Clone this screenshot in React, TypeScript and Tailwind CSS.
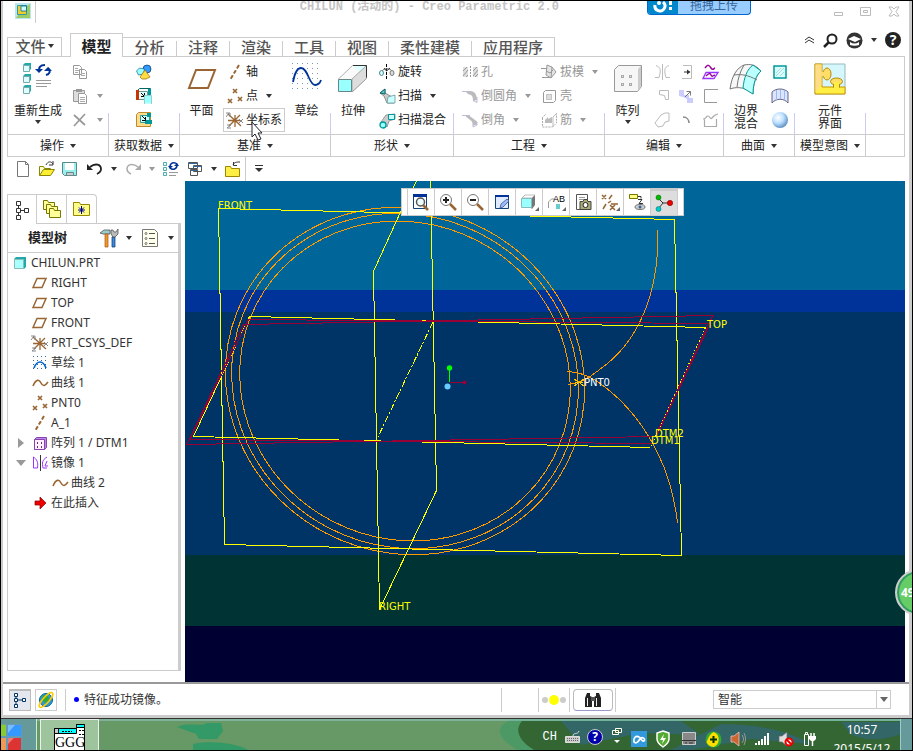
import { ReactNode } from "react";
import { clsx } from "clsx";

const ui = "font-['Noto_Sans','Noto_Sans_CJK_SC',sans-serif]";
const song = "font-['Liberation_Mono','Noto_Sans_CJK_SC',monospace]";

function Svg({ w, h, children, className }: { w: number; h: number; children: ReactNode; className?: string }) {
  return (
    <svg width={w} height={h} viewBox={`0 0 ${w} ${h}`} fill="none" className={clsx("shrink-0", className)} aria-hidden="true">
      {children}
    </svg>
  );
}

function Caret({ dim }: { dim?: boolean }) {
  return (
    <Svg w={6} h={4}>
      <path d="M0 0h6L3 4z" fill={dim ? "#999" : "#333"} />
    </Svg>
  );
}

/* ---------- ribbon icons ---------- */

const Cube = ({ x, y, s = 6 }: { x: number; y: number; s?: number }) => (
  <g>
    <path d={`M${x} ${y + 2}l2-2h${s}v${s}l-2 2z`} fill="#2aa" />
    <path d={`M${x + 0.5} ${y + 2.5}h${s}v${s}h-${s}z`} fill="#dff" stroke="#7aa" />
  </g>
);

const Regenerate = () => (
  <Svg w={30} h={32}>
    <Cube x={0} y={0} />
    <Cube x={0} y={11} />
    <Cube x={0} y={22} />
    <path d="M17 8c-2-3 0-6 5-6M25 5c3 3 2 6-2 7" stroke="#039" strokeWidth="2" />
    <path d="M12 6h8l-4 4zM21 8l4-4 4 4z" fill="#039" />
    <path d="M13 17.500h15M13 20.500h15M13 23.500h11" stroke="#999" />
  </Svg>
);

const Copy = () => (
  <Svg w={16} h={16}>
    <path d="M1.500 1.500h6l2 2v7h-8zM7.500 5.500h5l2 2v7h-7z" fill="#fff" stroke="#999" />
    <path d="M3 4.500h3M3 6.500h4M3 8.500h3M9 9.500h4M9 11.500h4" stroke="#aaa" />
  </Svg>
);

const Paste = () => (
  <Svg w={16} h={16}>
    <path d="M1.500 2.500h11v11h-11z" fill="#ddd" stroke="#999" />
    <path d="M4 1h6v3H4z" fill="#999" />
    <path d="M6.500 5.500h6l2 2v8h-8z" fill="#fff" stroke="#999" />
    <path d="M8 9.500h5M8 11.500h5M8 13.500h5" stroke="#aaa" />
  </Svg>
);

const Delete = () => (
  <Svg w={16} h={16}>
    <path d="M2 3l11 10M13 2L2 14" stroke="#999" strokeWidth="1.700" />
  </Svg>
);

const UserFeature = () => (
  <Svg w={18} h={16}>
    <circle cx="12" cy="5" r="4" fill="#39f" stroke="#036" strokeWidth=".7" />
    <path d="M1.500 7l3-3 5 1-1 5-5 1z" fill="#9ff" stroke="#069" strokeWidth=".7" />
    <path d="M5 13l5-7 5 7-4 2H7z" fill="#fd4" stroke="#960" strokeWidth=".7" />
  </Svg>
);

const CopyGeometry = () => (
  <Svg w={18} h={18}>
    <path d="M1.500 4.500l3-3h11v3" stroke="#066" fill="#fff" />
    <path d="M3.500 4.500h9v8h-9z" fill="#dff" stroke="#699" />
    <path d="M1 3h3v10H1z" fill="#c30" />
    <path d="M13 2h3v6h-3z" fill="#099" />
    <path d="M6 6l3 3M9.500 6v3.500H6" stroke="#000" />
    <path d="M9.500 8.500h7v8h-7z" fill="#9ff" />
    <path d="M9.500 17V8.500h7V17" stroke="#9cc" />
  </Svg>
);

const Shrinkwrap = () => (
  <Svg w={18} h={18}>
    <path d="M1.500 3.500l2-2h12v14h-14z" fill="#fd8" stroke="#b83" />
    <path d="M5.500 4.500h9v7h-9z" fill="#cff" stroke="#399" />
    <path d="M12 2h4v4h-4zM10 9h7v4h-7z" fill="#099" />
    <path d="M7 5l4 4M10.500 6v3.500H7" stroke="#000" />
  </Svg>
);

const PlaneBig = () => (
  <Svg w={30} h={32}>
    <path d="M9 7h19l-7 18H2z" fill="#fff" stroke="#963" strokeWidth="2" />
  </Svg>
);

const Plane = () => (
  <Svg w={16} h={14}>
    <path d="M5 2.500h9l-4 9H1z" stroke="#963" strokeWidth="1.500" />
  </Svg>
);

const Axis = () => (
  <Svg w={16} h={17}>
    <path d="M12 1L3 16" stroke="#963" strokeWidth="2" strokeDasharray="4 2" />
  </Svg>
);

const Points = () => (
  <Svg w={17} h={17}>
    <path d="M6 1l4 4M10 1L6 5M1 11l4 4M5 11l-4 4M11 9l4 4M15 9l-4 4" stroke="#963" strokeWidth="1.600" />
  </Svg>
);

const Csys = () => (
  <Svg w={18} h={17}>
    <path d="M2 2l13 12M14 3L3 14M2 8.500h12M9 3v12" stroke="#963" strokeWidth="1.300" />
    <path d="M0 1l4 0M4 1v4M0 5l3-4M13 7l4 4M17 7l-4 4M1 13h4l-4 3h4" stroke="#888" />
  </Svg>
);

const dots = (w: number, h: number, step: number, fill: string) => {
  const out: ReactNode[] = [];
  for (let y = 0; y < h; y += step)
    for (let x = 0; x < w; x += step) out.push(<rect key={`${x}-${y}`} x={x} y={y} width="1" height="1" fill={fill} />);
  return out;
};

const SketchBig = () => (
  <Svg w={30} h={32}>
    {dots(30, 30, 5, "#79b")}
    <path d="M1 19C3 8 6 5 9 5c7 0 8 17 14 17 3 0 5-2 6-5" stroke="#039" strokeWidth="1.800" />
  </Svg>
);

const ExtrudeBig = () => (
  <Svg w={30} h={32}>
    <path d="M.5 16L14.500 2.500h14v13L14 29z" fill="#fafafa" stroke="#999" strokeWidth=".8" />
    <path d="M14.500 2.500h14v13z" fill="#dff" />
    <path d="M14 16L28.500 2.500v13L14 29z" fill="#ddd" stroke="#999" strokeWidth=".8" />
    <path d="M15 2.500h13.500v12" stroke="#333" />
    <path d="M.5 16.500h13v12H.5z" fill="#9ff" stroke="#688" />
  </Svg>
);

const Revolve = () => (
  <Svg w={16} h={16}>
    <path d="M7.500 0v16" stroke="#000" strokeDasharray="3 1" />
    <path d="M3 7c2-3 8-3 10 0" stroke="#777" />
    <ellipse cx="2.500" cy="9" rx="2" ry="2.500" fill="#cff" stroke="#588" />
    <ellipse cx="13" cy="9" rx="2" ry="2.500" fill="#ddd" stroke="#777" />
    <path d="M5 4l2.500 3L11 4" stroke="#333" />
  </Svg>
);

const Sweep = () => (
  <Svg w={17} h={16}>
    <path d="M1 5l5-4v4l9 5v5H8L5 8z" fill="#ccc" stroke="#777" strokeWidth=".8" />
    <path d="M8 15l1-6 7-2v8z" fill="#cff" stroke="#699" strokeWidth=".8" />
    <path d="M1 5l5-4v5z" fill="#6cc" stroke="#066" />
  </Svg>
);

const SweptBlend = () => (
  <Svg w={17} h={17}>
    <path d="M2 10L7 3l9-1v5l-6 2-2 6z" fill="#ccc" stroke="#888" strokeWidth=".8" />
    <path d="M9.500 2.500h6v5h-6z" fill="#cff" stroke="#099" />
    <circle cx="4" cy="13" r="3" fill="#9ff" stroke="#099" strokeWidth="1.300" />
  </Svg>
);

const Hole = () => (
  <Svg w={17} h={14}>
    <path d="M1 2h5v10H1zM11 2h5v10h-5z" fill="#ddd" />
    <path d="M1 6l4-4M1 11l5-6M4 12l2-2M11 6l4-4M11 11l5-6M13 12l3-3" stroke="#999" />
    <path d="M8.500 1v12" stroke="#999" strokeDasharray="2 1" />
  </Svg>
);

const Round = () => (
  <Svg w={17} h={16}>
    <path d="M3 3h5c5 0 7 4 7 9l-4 1c0-5-1-6-5-7z" fill="#bbb" />
    <path d="M0 3.500h8M11 12.500l4 2V9" stroke="#bbd" />
  </Svg>
);

const Chamfer = () => (
  <Svg w={17} h={16}>
    <path d="M3 3.500h4l8 6v3l-4 1-1-4-5-4z" fill="#bbb" />
    <path d="M0 3.500h8M11 12v3l4-2v-3" stroke="#bbd" />
  </Svg>
);

const Draft = () => (
  <Svg w={16} h={16}>
    <path d="M6 1l5 2 4 5-5 6-5-3z" fill="#e4e4e4" stroke="#999" />
    <path d="M11 3l-1 11M5 7l4 2 3-3M0 4.500h6M1 13.500h8" stroke="#999" />
  </Svg>
);

const Shell = () => (
  <Svg w={15} h={15}>
    <path d="M1.500 3.500l2-2h10v10l-2 2h-10z" fill="#fff" stroke="#999" />
    <path d="M4.500 5.500h5v5h-5z" fill="#ddd" stroke="#999" strokeDasharray="1 1" />
  </Svg>
);

const Rib = () => (
  <Svg w={17} h={16}>
    <path d="M1.500 6v9h10l4-4V2M1 6l4-4" stroke="#aaa" strokeDasharray="2 1" />
    <path d="M4 8l3-3v2l4-2v6H4z" fill="#bbb" />
    <path d="M16 1l-4 4v10" stroke="#bbb" />
  </Svg>
);

const PatternBig = () => (
  <Svg w={30} h={32}>
    <path d="M1.500 6.500l4-4h23v21l-4 5h-23z" fill="#f6f6f6" stroke="#999" />
    <path d="M25 6l3-3v20l-3 5z" fill="#ccc" />
    {[[8, 12], [16, 12], [8, 20], [16, 20]].map(([x, y]) => (
      <rect key={`${x}-${y}`} x={x + 0.5} y={y + 0.5} width="2" height="2" fill="#ddd" stroke="#aaa" />
    ))}
  </Svg>
);

const gray = "#bbb";
const editIcons: ReactNode[][] = [
  [
    <path d="M8.500 0v16M2 1.500c5 2 5 5 3 12H1M15 1.500c-5 2-5 5-3 12h4" stroke={gray} />,
    <path d="M5.500 2.500h9v9h-3l-1-4-5-1z" stroke={gray} />,
    <path d="M7 3l4-2h4v8l-4 1-2 4-5 1-3-4 3-4z" stroke={gray} />,
  ],
  [
    <>
      <path d="M5 1.500h8.500v13H4" stroke={gray} />
      <path d="M6 8h5" stroke="#333" />
      <path d="M9 5.500L12.500 8 9 10.500z" fill="#333" />
    </>,
    <>
      <path d="M1 2h5v5h5v3h4v5H9v-4L5 9 1 8z" fill="#ccf" />
      <path d="M8.500 3.500h4v4M7 9l5-5" stroke="#777" />
    </>,
    <path d="M5 5c4 0 6 3 6 6" stroke="#888" strokeWidth="1.500" />,
  ],
  [
    <>
      <path d="M3 4c3-4 4-3 6 0s3 0 4 0" stroke="#909" strokeWidth="1.500" />
      <path d="M4 8.500h12l-4 6H1z" stroke="#93f" strokeWidth="1.300" />
      <path d="M4 12c3-3 4-3 5-1s2 1 4 0" stroke="#909" strokeWidth="1.500" />
    </>,
    <path d="M16 1.500H2.500v13H15" stroke="#999" />,
    <path d="M14.500 7v7.500h-12V7.500M1 7c3 0 3-3 5-3s2 4 4 2 3-4 6-4" stroke="#aaa" strokeWidth="1.200" />,
  ],
];

const BoundaryBlend = () => (
  <Svg w={34} h={32}>
    <path d="M1 26C3 12 8 5 15 2c6-1 11-1 17 6-5 4-8 13-8 23-6-6-15-8-23-5z" fill="#f7f7f7" stroke="#777" />
    <path d="M24 2l8 6c-5 4-8 13-8 23l-10-6c1-10 4-19 10-23z" fill="#bff" stroke="#099" />
    <path d="M5 12c8-1 14 0 23 5M15 2C11 9 9 15 8 24" stroke="#777" />
  </Svg>
);

const Fill = () => (
  <Svg w={16} h={16}>
    <path d="M2 2h12v12H2z" fill="#dff" stroke="#099" strokeWidth="1.500" />
    <path d="M4 9l5-5M4 12l8-8M8 12l4-4" stroke="#9dd" />
  </Svg>
);

const Style = () => (
  <Svg w={18} h={18}>
    <path d="M1 5c4-4 12-4 16 0v11c-4-5-12-5-16 0z" fill="#dde4ff" stroke="#557" strokeWidth=".9" />
    <path d="M5.500 3v10M9.500 3v9M13.500 3v10" stroke="#9be" />
  </Svg>
);

const Freestyle = () => (
  <Svg w={18} h={18}>
    <defs>
      <radialGradient id="ball" cx=".38" cy=".35" r=".7">
        <stop offset="0" stopColor="#fff" />
        <stop offset=".5" stopColor="#bce0ff" />
        <stop offset="1" stopColor="#58b" />
      </radialGradient>
    </defs>
    <circle cx="9" cy="9" r="8" fill="url(#ball)" />
  </Svg>
);

const ComponentInterface = () => (
  <Svg w={32} h={32}>
    <path d="M1 1h30v30H1z" fill="#d4f6fc" stroke="#9bb" />
    <path d="M1 1h7v23h23v7H1z" fill="#fe4" stroke="#c90" />
    <path d="M1.500 1.500h6v20l-6 8z" fill="#fd8" />
    <ellipse cx="13" cy="11" rx="4" ry="6" fill="#fd6" stroke="#b80" />
    <path d="M7 9h4v4H7z" fill="#fd6" />
    <ellipse cx="22.500" cy="18.500" rx="6" ry="3.500" fill="#fd6" stroke="#b80" />
    <path d="M20 19h5v6h-5z" fill="#fe4" />
    <path d="M19.500 21.500v3M25.500 21.500v3" stroke="#b80" />
  </Svg>
);

/* ---------- ribbon ---------- */

function Group({ label, width, children }: { label: string; width: string; children: ReactNode }) {
  return (
    <section className={clsx("flex shrink-0 flex-col", width)} aria-label={label}>
      <div className="flex flex-1">
        <div className="flex flex-1">{children}</div>
        <span className="h-[21px] w-px self-end bg-[#ccccee]" />
      </div>
      <button className="flex h-[22px] items-center justify-center gap-1.5 border-t border-r border-[#ccc]">
        {label}
        <Caret />
      </button>
    </section>
  );
}

function Big({ icon, lines, width, caret }: { icon: ReactNode; lines: string[]; width: string; caret?: boolean }) {
  return (
    <button className={clsx("flex shrink-0 flex-col items-center pt-1.5 leading-[13px]", width)}>
      {icon}
      <span className="mt-[9px] mb-[3px]">
        {lines.map((l) => (
          <span key={l} className="block">{l}</span>
        ))}
      </span>
      {caret && <Caret />}
    </button>
  );
}

function Row({ icon, label, dim, caret, boxed }: { icon: ReactNode; label?: string; dim?: boolean; caret?: boolean; boxed?: boolean }) {
  return (
    <button
      className={clsx(
        "flex h-6 items-center gap-0.5 border px-0.5 whitespace-nowrap",
        boxed ? "border-[#ccc]" : "border-transparent",
        dim && "text-[#999]"
      )}
    >
      <span className="flex w-[18px] justify-center">{icon}</span>
      {label}
      {caret && <span className="ml-1.5"><Caret dim={dim} /></span>}
    </button>
  );
}

function Ribbon() {
  return (
    <div className="mx-1 flex h-[101px] border border-[#ccc] text-xs text-[#222]">
      <Group label="操作" width="w-[101px]">
        <Big icon={<Regenerate />} lines={["重新生成"]} width="w-[60px]" caret />
        <div className="pt-[3px]">
          <Row icon={<Copy />} />
          <Row icon={<Paste />} caret dim />
          <Row icon={<Delete />} caret dim />
        </div>
      </Group>
      <Group label="获取数据" width="w-[71px]">
        <div className="mx-auto pt-[3px]">
          <Row icon={<UserFeature />} />
          <Row icon={<CopyGeometry />} />
          <Row icon={<Shrinkwrap />} />
        </div>
      </Group>
      <Group label="基准" width="w-[151px]">
        <Big icon={<PlaneBig />} lines={["平面"]} width="w-[43px]" />
        <div className="pt-[3px]">
          <Row icon={<Axis />} label="轴" />
          <Row icon={<Points />} label="点" caret />
          <Row icon={<Csys />} label="坐标系" boxed />
        </div>
        <Big icon={<SketchBig />} lines={["草绘"]} width="w-[43px]" />
      </Group>
      <Group label="形状" width="w-[123px]">
        <Big icon={<ExtrudeBig />} lines={["拉伸"]} width="w-[44px]" />
        <div className="pt-[3px]">
          <Row icon={<Revolve />} label="旋转" />
          <Row icon={<Sweep />} label="扫描" caret />
          <Row icon={<SweptBlend />} label="扫描混合" />
        </div>
      </Group>
      <Group label="工程" width="w-[151px]">
        <div className="w-[79px] pt-[3px] pl-1">
          <Row icon={<Hole />} label="孔" dim />
          <Row icon={<Round />} label="倒圆角" dim caret />
          <Row icon={<Chamfer />} label="倒角" dim caret />
        </div>
        <div className="pt-[3px] pl-1">
          <Row icon={<Draft />} label="拔模" dim caret />
          <Row icon={<Shell />} label="壳" dim />
          <Row icon={<Rib />} label="筋" dim caret />
        </div>
      </Group>
      <Group label="编辑" width="w-[119px]">
        <Big icon={<PatternBig />} lines={["阵列"]} width="w-[45px]" caret />
        {editIcons.map((col, i) => (
          <div key={i} className="pt-[3px]">
            {col.map((icon, j) => (
              <Row key={j} icon={<Svg w={17} h={16}>{icon}</Svg>} />
            ))}
          </div>
        ))}
      </Group>
      <Group label="曲面" width="w-[71px]">
        <Big icon={<BoundaryBlend />} lines={["边界", "混合"]} width="w-[44px]" />
        <div className="pt-[3px]">
          <Row icon={<Fill />} />
          <Row icon={<Style />} />
          <Row icon={<Freestyle />} />
        </div>
      </Group>
      <Group label="模型意图" width="w-[71px]">
        <Big icon={<ComponentInterface />} lines={["元件", "界面"]} width="w-full" />
      </Group>
      <div className="flex flex-1 items-end">
        <div className="h-[22px] w-full border-t border-[#ccc]" />
      </div>
    </div>
  );
}

/* ---------- title and tabs ---------- */

function TitleBar() {
  return (
    <header className="flex h-[30px] items-start overflow-hidden">
      <div className="flex h-[22px] w-[33px] items-center border-r border-[#ccc] pb-0.5 pl-3">
        <Svg w={16} h={16}>
          <path d="M0 0h16v16H0z" fill="#bde6f0" />
          <path d="M15 1v14l-14 0 2-3h9V3z" fill="#9c6" />
          <path d="M2.500 2.500h9v9h-9z" fill="#ec3" stroke="#399" />
          <path d="M6 3h5.500v5H6z" fill="#cff" stroke="#069" strokeWidth=".8" />
        </Svg>
      </div>
      <h1 className={clsx("-mt-0.5 ml-auto text-xs leading-4 font-bold whitespace-pre text-[#c4c4c4]", song)}>
        CHILUN (活动的) - Creo Parametric 2.0
      </h1>
      <button className="ml-[88px] flex h-[14px] w-[104px] overflow-hidden rounded-b border border-t-0 border-[#06c] bg-[#9cf] text-xs leading-[10px] text-[#369]">
        <span className="flex h-full w-[30px] items-start justify-center bg-[#08c]">
          <Svg w={22} h={12}>
            <path d="M3 4a5 5 0 1 0 8-3" stroke="#fff" strokeWidth="3" />
            <circle cx="7" cy="2" r="2" fill="#fff" />
            <path d="M17 0h3v4h-3zM17 6h3v3h-3z" fill="#fff" />
          </Svg>
        </span>
        <span className="flex-1">拖拽上传</span>
      </button>
      <div className="mt-1 ml-[83px] flex gap-4 pr-2 text-[#bbb]">
        <button aria-label="最小化"><Svg w={10} h={12}><path d="M.5 7.500h8v3h-8z" stroke="#bbb" /></Svg></button>
        <button aria-label="还原"><Svg w={12} h={12}><path d="M.5 2.500h10v8H.5zM3.500 5.500h4v2h-4z" stroke="#bbb" /></Svg></button>
        <button aria-label="关闭"><Svg w={13} h={12}><path d="M1 2h3l2 2 2-2h3L8 6.500l3 4.500H8L6 9l-2 2H1l3-4.500z" stroke="#bbb" /></Svg></button>
      </div>
    </header>
  );
}

const tabs = ["分析", "注释", "渲染", "工具", "视图", "柔性建模", "应用程序"];

function TabBar() {
  return (
    <div className="flex h-[25px] items-end px-1 text-[15px] leading-[18px] font-medium text-[#555]">
      <button className="flex h-[19px] w-[55px] items-center justify-center gap-0.5 border border-b-0 border-[#ccc] pb-0.5">
        文件
        <Caret />
      </button>
      <button className="relative -mb-px ml-2 h-6 w-[53px] border border-b-0 border-[#ccc] bg-white font-bold text-[#222]">模型</button>
      <nav className="flex h-[19px] items-end border-t border-r border-[#ccc]">
        {tabs.map((t, i) => (
          <button key={t} className={clsx("flex h-[15px] items-center justify-center pb-1", t.length > 2 ? "w-[83px]" : "w-[53px]", i > 0 && "border-l border-[#ccc]")}>
            {t}
          </button>
        ))}
      </nav>
      <div className="ml-auto flex h-[18px] items-center gap-2 self-start pr-1">
        <button aria-label="折叠"><Svg w={11} h={8}><path d="M1 4l4-3 5 3M1 7l4-3 5 3" stroke="#333" /></Svg></button>
        <button aria-label="搜索">
          <Svg w={15} h={15}><circle cx="9" cy="6" r="4.500" stroke="#222" strokeWidth="2" /><path d="M6 9l-5 5" stroke="#222" strokeWidth="2.500" /></Svg>
        </button>
        <button aria-label="学习" className="flex items-center gap-2">
          <Svg w={17} h={17}>
            <circle cx="8.500" cy="8.500" r="8" fill="#333" />
            <path d="M2 7l6-3 7 3-6 3z" fill="#fff" />
            <path d="M4 10c3 2 6 2 9 0v3c-3 1-6 1-9 0z" fill="#fff" />
          </Svg>
          <Caret />
        </button>
        <button aria-label="帮助" className="flex size-4 items-center justify-center rounded-full bg-[#222] text-sm leading-4 font-bold text-white">?</button>
      </div>
    </div>
  );
}

/* ---------- quick access ---------- */

function QuickBar() {
  return (
    <div className="flex h-6 items-center pl-[13px]">
      <button aria-label="新建"><Svg w={16} h={18}><path d="M1.500 1.500h8l3 3v12h-11zM9.500 1.500v3h3" fill="#fff" stroke="#777" /></Svg></button>
      <button aria-label="打开" className="ml-1.5">
        <Svg w={18} h={18}><path d="M1.500 15.500v-9h4l1 2h6v2" fill="#ffc" stroke="#880" /><path d="M1.500 15.500l4-6h11l-4 6z" fill="#fe3" stroke="#880" /><path d="M8 5c2-4 5-4 7-1M15 1v4h-4" stroke="#333" /></Svg>
      </button>
      <button aria-label="保存" className="ml-1.5">
        <Svg w={16} h={16}><path d="M.5 1.500h14v13h-12l-2-2z" fill="#9ee" stroke="#588" /><path d="M3 2h9v7H3z" fill="#fff" /><path d="M4.500 11.500h7v3h-7z" fill="#ccc" stroke="#688" /></Svg>
      </button>
      <button aria-label="撤消" className="ml-[9px] flex items-center gap-2">
        <Svg w={16} h={14}><path d="M3 5c5-4 11-3 11 2 0 3-2 4-4 5" stroke="#222" strokeWidth="1.800" /><path d="M0 2v6h6z" fill="#222" /></Svg>
        <Caret />
      </button>
      <button aria-label="重做" className="ml-2 flex items-center gap-2">
        <Svg w={16} h={14}><path d="M13 5C8 1 2 2 2 7c0 3 2 4 4 5" stroke="#aaa" strokeWidth="1.500" /><path d="M16 2v6h-6z" fill="#aaa" /></Svg>
        <Caret dim />
      </button>
      <button aria-label="重新生成" className="ml-2">
        <Svg w={16} h={16}><path d="M.5 1.500h3v3h-3zM.5 6.500h3v3h-3zM.5 11.500h3v3h-3z" fill="#dff" stroke="#5aa" /><path d="M6 11.500h9M6 14.500h7" stroke="#999" /><path d="M7 5c1-4 5-4 7-2M14 5c-1 4-5 4-7 2" stroke="#039" strokeWidth="1.500" /><path d="M5 5h5L7 8zM11 5h5l-2-3z" fill="#039" /></Svg>
      </button>
      <button aria-label="窗口" className="ml-2 flex items-center gap-2">
        <Svg w={16} h={16}><path d="M1.500 1.500h9v6h-9zM6.500 4.500h8v6h-8zM3.500 8.500h7v6h-7z" fill="#fff" stroke="#555" /><path d="M1 2.500h10M6 5.500h9M3 9.500h8" stroke="#369" /></Svg>
        <Caret />
      </button>
      <button aria-label="关闭" className="ml-2">
        <Svg w={16} h={17}><path d="M.5 5.500h5l1 2h8v8H.5z" fill="#fe4" stroke="#980" /><path d="M8 4c1-3 4-3 7-3M8.500 1v3.500H12" stroke="#333" /></Svg>
      </button>
      <span className="ml-1 h-6 w-px bg-[#ccc]" />
      <button aria-label="自定义" className="ml-2"><Svg w={10} h={8}><path d="M1 .5h8" stroke="#333" /><path d="M1 3h8L5 7z" fill="#333" /></Svg></button>
    </div>
  );
}

/* ---------- model tree ---------- */

const TreeIcon = ({ boxes = "#333" }: { boxes?: string }) => (
  <Svg w={14} h={20}>
    <path d="M1.500 1.500h4v4h-4zM1.500 8.500h4v4h-4zM1.500 15.500h4v4h-4zM9.500 8.500h4v4h-4zM3.500 5.500v3M3.500 12.500v3M5.500 10.500h4" stroke={boxes} />
  </Svg>
);

const Curve = () => (
  <Svg w={17} h={12}><path d="M1 9c3-7 6-7 8-3s4 3 7-1" stroke="#963" strokeWidth="1.600" /></Svg>
);

const Sketch = () => (
  <Svg w={15} h={15}>
    {dots(14, 14, 4, "#369")}
    <path d="M1 12C4 4 10 4 13 12" stroke="#06c" strokeWidth="1.700" />
  </Svg>
);

type Node = { label: string; icon: ReactNode; depth: 0 | 1 | 2; open?: boolean };

const nodes: Node[] = [
  { label: "CHILUN.PRT", depth: 0, icon: <Svg w={14} h={14}><path d="M1 3l2-2h10v10l-2 2z" fill="#2aa" /><path d="M1.500 3.500h9v9h-9z" fill="#aff" stroke="#8bb" /></Svg> },
  { label: "RIGHT", depth: 1, icon: <Plane /> },
  { label: "TOP", depth: 1, icon: <Plane /> },
  { label: "FRONT", depth: 1, icon: <Plane /> },
  { label: "PRT_CSYS_DEF", depth: 1, icon: <Csys /> },
  { label: "草绘 1", depth: 1, icon: <Sketch /> },
  { label: "曲线 1", depth: 1, icon: <Curve /> },
  { label: "PNT0", depth: 1, icon: <Points /> },
  { label: "A_1", depth: 1, icon: <Axis /> },
  {
    label: "阵列 1 / DTM1", depth: 1, open: false,
    icon: <Svg w={15} h={15}><path d="M1.500 3.500l2-2h10v10l-2 2h-10z" fill="#b8e" stroke="#84a" /><path d="M1.500 3.500h10v10h-10z" fill="#fef" stroke="#84a" /><path d="M4 6h1v2H4zM8 6h1v2H8zM4 10h1v2H4zM8 10h1v2H8z" fill="#636" /></Svg>,
  },
  {
    label: "镜像 1", depth: 1, open: true,
    icon: <Svg w={17} h={16}><path d="M8.500 0v16" stroke="#333" /><path d="M1.500 2c3 2 5 5 4 11h-4zM15 2c-5 3-5 6-4 11h4M15 6l-2 5h3" stroke="#93f" /></Svg>,
  },
  { label: "曲线 2", depth: 2, icon: <Curve /> },
  { label: "在此插入", depth: 1, icon: <Svg w={13} h={14}><path d="M1 5h5V1l6 6-6 6V9H1z" fill="#e00" stroke="#800" strokeWidth=".7" /></Svg> },
];

const indent = ["pl-[2px]", "pl-[22px]", "pl-[42px]"];

function ModelTree() {
  return (
    <aside className="flex w-[182px] shrink-0 flex-col pt-[13px] pb-[11px] pl-1">
      <div className="flex h-[29px]">
        <button aria-label="模型树" className="relative -mb-px flex w-[30px] items-center justify-center border border-b-0 border-[#ccc] bg-white"><TreeIcon /></button>
        <button aria-label="文件夹" className="flex w-[30px] items-center justify-center border-t border-r border-[#ccc]">
          <Svg w={20} h={20}>
            {[0, 4, 8].map((d) => (
              <path key={d} d={`M${1.5 + d * 0.75} ${1.5 + d}h4l1 2h6v7h-11z`} fill="#ff9" stroke="#770" />
            ))}
          </Svg>
        </button>
        <button aria-label="收藏夹" className="flex w-[30px] items-center justify-center rounded-tr-sm border-t border-r border-[#ccc]">
          <Svg w={18} h={16}><path d="M.5 1.500h6l1 2h9v11H.5z" fill="#ff8" stroke="#980" /><path d="M8.500 5v8M5 9h7M6 6.500l5 5M11 6.500l-5 5" stroke="#009" /></Svg>
        </button>
      </div>
      <div className="flex w-[174px] flex-1 flex-col border border-r-[3px] border-[#ccc]">
        <div className="flex h-[29px] items-center border-b border-[#ccc] pl-5">
          <h2 className="text-[13px] font-bold text-[#222]">模型树</h2>
          <button aria-label="设置" className="ml-8 flex items-center gap-[7px]">
            <Svg w={20} h={20}>
              <path d="M1 5l4-3 6 0v4H6l-2 0z" fill="#9cc" stroke="#555" strokeWidth=".8" />
              <path d="M6 6h3v13H6z" fill="#e92" stroke="#a52" strokeWidth=".7" />
              <path d="M13 9h3v10h-3z" fill="#48d" stroke="#036" strokeWidth=".7" />
              <path d="M12 2v4l2 3h2l3-3V1l-2 3h-2l-1-2z" fill="#bbb" stroke="#555" strokeWidth=".8" />
            </Svg>
            <Caret />
          </button>
          <button aria-label="显示" className="ml-2.5 flex items-center gap-[9px]">
            <Svg w={17} h={20}>
              <path d="M.5 1.500h12l3 3v14H.5z" fill="#ffe" stroke="#777" />
              <path d="M7 5.500h6M7 10.500h6M7 15.500h6" stroke="#555" />
              <circle cx="4" cy="5.500" r="1" stroke="#555" strokeWidth=".8" /><circle cx="4" cy="10.500" r="1" stroke="#555" strokeWidth=".8" /><circle cx="4" cy="15.500" r="1" stroke="#555" strokeWidth=".8" />
            </Svg>
            <Caret />
          </button>
        </div>
        <ul className="text-xs text-[#333]">
          {nodes.map((n) => (
            <li key={n.label} className="flex h-5 items-center">
              {n.open !== undefined && (
                <button aria-label="展开" className="-mr-[18px] flex w-[18px] justify-end">
                  <Svg w={10} h={10}><path d={n.open ? "M0 2h10L5 8z" : "M2 0l6 5-6 5z"} fill="#999" /></Svg>
                </button>
              )}
              <div className={clsx("flex items-center", indent[n.depth])}>
                <span className="flex w-5 justify-center">{n.icon}</span>
                <span className="ml-px">{n.label}</span>
              </div>
            </li>
          ))}
        </ul>
      </div>
    </aside>
  );
}

/* ---------- graphics area ---------- */

const viewTools: { label: string; icon: ReactNode }[] = [
  { label: "重新调整", icon: <><path d="M1.500 2.500v13h13v-13z" fill="#fff" stroke="#147" /><path d="M1 2.500h14" stroke="#039" strokeWidth="3" /><circle cx="8.500" cy="9" r="4" fill="#eff" stroke="#555" strokeWidth="1.500" /><path d="M11 12l5 5" stroke="#963" strokeWidth="2.500" /></> },
  { label: "放大", icon: <><circle cx="7" cy="7" r="5.500" fill="#fff" stroke="#777" /><path d="M4 7h6M7 4v6" stroke="#222" strokeWidth="2" /><path d="M11 11l6 6" stroke="#963" strokeWidth="2.500" /></> },
  { label: "缩小", icon: <><circle cx="7" cy="7" r="5.500" fill="#fff" stroke="#777" /><path d="M4 7h6" stroke="#222" strokeWidth="2" /><path d="M11 11l6 6" stroke="#963" strokeWidth="2.500" /></> },
  { label: "重画", icon: <><path d="M2.500 2.500h13v13h-13z" fill="#ddeaff" stroke="#147" /><path d="M2 3h14" stroke="#039" strokeWidth="2" /><path d="M14 6l-6 5-1 4 3-1 6-6z" fill="#9bf" stroke="#458" strokeWidth=".8" /></> },
  { label: "显示样式", icon: <><path d="M2 5l3-3h10v10l-3 4z" fill="#777" /><path d="M2 5l3-3h10l-3 3z" fill="#fff" stroke="#999" strokeWidth=".6" /><path d="M1.500 5.500h10v9h-10z" fill="#9ff" stroke="#8bb" /><path d="M19 14v4h-4z" fill="#666" /></> },
  { label: "已保存方向", icon: <><path d="M1.500 15V9l3-3H7" stroke="#999" /><path d="M9 11h4v5H9z" fill="#6cc" /><text x="6" y="9" fontSize="9" fill="#000" fontFamily="Liberation Sans">AB</text><path d="M19 14v4h-4z" fill="#666" /></> },
  { label: "视图管理器", icon: <><path d="M2.500 1.500h11v15h-11z" fill="#fff" stroke="#555" /><path d="M5 4.500h6M5 6.500h6" stroke="#999" /><path d="M6 8.500h3l1-2h3l1 2h3v8H6z" fill="#aa7" stroke="#444" /><circle cx="11.500" cy="12" r="2.500" fill="#fff" stroke="#222" /></> },
  { label: "基准显示", icon: <><path d="M1 2l4 4M5 2L1 6M9 12l5 5M14 12l-5 5M2 16l3-5M8 6l3-4M7 10l3-2M10 11h7" stroke="#963" strokeWidth="1.500" /><path d="M19 14v4h-4z" fill="#666" /></> },
  { label: "注释显示", icon: <><path d="M1.500 1.500h8v4h-8z" fill="#ff8" stroke="#770" /><path d="M10 3.500h3v2M10 6.500h4l-3 4h4" stroke="#333" /><ellipse cx="12" cy="14" rx="5" ry="2.500" fill="#ccc" stroke="#777" /><circle cx="12" cy="14" r="1.500" fill="#369" /></> },
  { label: "旋转中心", icon: <><path d="M3 4l5 5h8M8 9l-5 6" stroke="#333" /><circle cx="3.500" cy="3.500" r="2.500" fill="#0b0" stroke="#060" strokeWidth=".5" /><circle cx="15" cy="9" r="2.700" fill="#e00" stroke="#600" strokeWidth=".5" /><circle cx="3.500" cy="15" r="2.500" fill="#0cc" stroke="#066" strokeWidth=".5" /></> },
];

const rings = [
  [181.7, 171.5],
  [175.4, 165.5],
  [167.2, 157.9],
];

function Scene() {
  return (
    <svg className="absolute inset-0 size-full" shapeRendering="crispEdges" fill="none">
      {/* coordinates are in window space, shifted to the corner of the view */}
      <g transform="translate(-185 -181)">
        <rect x="185" y="181" width="3000" height="109" fill="#069" />
        <rect x="185" y="290" width="3000" height="22" fill="#039" />
        <rect x="185" y="312" width="3000" height="243" fill="#036" />
        <rect x="185" y="555" width="3000" height="71" fill="#033" />
        <rect x="185" y="626" width="3000" height="2000" fill="#003" />
        <g stroke="#f90">
          {rings.map(([a, b]) => (
            <ellipse key={a} cx="405" cy="381" rx={a} ry={b} transform="rotate(27.400 405 381)" />
          ))}
          <path d="M657.500 230C660 285 642 335 608 363C594 374 584 383 568 384.500" />
          <path d="M567 371.500C588 372 604 385 621 401C650 430 672 472 677.500 523" />
        </g>
        <g stroke="#ff0">
          <path d="M218.500 208.500L674.500 219.500L681.500 555.500L224.500 544.500z" />
          <path d="M705.500 327.500L249.500 316.500L193.500 436.500L650.500 447.500" />
          <path d="M416.500 181L400 213L373.500 271.500L379.500 609.500L436.500 490.500L430.500 181" />
          <path d="M433 322L377 439" strokeDasharray="7 2 2 2" />
        </g>
        <g stroke="#903">
          <path d="M709 323.500L248.500 319.500L190 439.500L652 443.500" />
          <path d="M707 327.500L713 315.500L243.500 324.500L187 444.500L656 436.500" />
          <path d="M708 327L656 436" strokeWidth="2" />
        </g>
        <path d="M705.500 327.500L650.500 447.500" stroke="#ff0" strokeDasharray="1.500 2" />
        <path d="M574 379l10 7M584 379l-10 7M575 382.500h8" stroke="#fc0" />
        <path d="M449.500 382V368" stroke="#0f0" />
        <path d="M450 382.500h14" stroke="#903" />
        <g shapeRendering="auto">
          <circle cx="449.500" cy="368" r="2.700" fill="#0f0" />
          <circle cx="464.500" cy="382.500" r="2" fill="#903" />
          <circle cx="447.500" cy="386.500" r="3" fill="#6cf" />
        </g>
        <g fill="#ff0" fontFamily="DejaVu Sans, sans-serif" fontSize="10">
          <text x="218" y="209">FRONT</text>
          <text x="707" y="328">TOP</text>
          <text x="655" y="437">DTM2</text>
          <text x="651" y="444">DTM1</text>
          <text x="379" y="610">RIGHT</text>
          <text x="584" y="386" fill="#fff">PNT0</text>
        </g>
      </g>
    </svg>
  );
}

function GraphicsArea() {
  return (
    <main className="relative mr-1 flex-1 overflow-hidden">
      <Scene />
      <div className="absolute top-[7px] left-[216px] flex h-7 border border-[#ccc] bg-white px-[5px]">
        {viewTools.map((t, i) => (
          <button
            key={t.label}
            aria-label={t.label}
            className={clsx(
              "flex w-[27px] items-center justify-center border-l border-[#ccc]",
              i === viewTools.length - 1 && "border-t-2 bg-[#ddd]"
            )}
          >
            <Svg w={19} h={19}>{t.icon}</Svg>
          </button>
        ))}
        <span className="w-px bg-[#ccc]" />
      </div>
    </main>
  );
}

/* ---------- status bar ---------- */

function StatusBar() {
  return (
    <div className="flex h-[33px] shrink-0 items-center border-t-2 border-[#999] pr-[18px] pl-1.5 text-xs text-[#333]">
      <button aria-label="导航器" className="flex size-[22px] items-center justify-center border border-t-2 border-[#bbb] bg-[#e4e8ee]">
        <Svg w={14} h={17}><path d="M1.500 1.500h3v3h-3zM1.500 6.500h3v3h-3zM1.500 12.500h3v3h-3zM9.500 6.500h3v3h-3z" fill="#fff" stroke="#036" /><path d="M3 5v1M3 10v2M5 8h4" stroke="#036" /></Svg>
      </button>
      <button aria-label="浏览器" className="ml-1 flex size-[22px] items-center justify-center border border-[#ccc]">
        <Svg w={18} h={18}>
          <circle cx="9" cy="9" r="6.500" fill="#39c" stroke="#069" />
          <path d="M6 4l5 1 1 4-4 3-3-4z" fill="#3a3" />
          <ellipse cx="9" cy="9" rx="9.500" ry="3" transform="rotate(-48 9 9)" stroke="#fc0" strokeWidth="1.500" />
        </Svg>
      </button>
      <span className="ml-2 h-[22px] w-px bg-[#ccc]" />
      <span className="ml-2 size-[5px] rounded-full bg-[#00f]" />
      <span className="ml-[5px]">特征成功镜像。</span>
      <div className="ml-auto flex h-6 items-center">
        <span className="h-6 w-px bg-[#ccc]" />
        <div className="ml-9 flex h-6 items-center gap-px border-x border-[#ccc] px-[3px]">
          <span className="size-1.5 rounded-full bg-[#ccc]" />
          <span className="size-[10px] rounded-full bg-[#ff0]" />
          <span className="size-1.5 rounded-full bg-[#ccc]" />
        </div>
        <button aria-label="查找" className="ml-[3px] flex h-[22px] w-10 items-center justify-center rounded-sm border border-[#bbb] border-b-[#99c]">
          <Svg w={18} h={16}>
            <path d="M3 1h3v3l2 1v10H1V6zM12 1h3l2 5v9h-7V5l2-1z" fill="#222" />
            <path d="M7 5h4v4H7z" fill="#555" />
            <path d="M3.500 6v8M12.500 6v8" stroke="#eee" />
          </Svg>
        </button>
        <span className="ml-0.5 h-6 w-px bg-[#ccc]" />
      </div>
      <div className="relative ml-[97px] flex">
        <select aria-label="选择过滤器" className="h-[19px] w-[178px] appearance-none border border-[#ccc] pl-1 text-xs leading-4">
          <option>智能</option>
        </select>
        <span className="pointer-events-none absolute top-px right-px flex h-[17px] w-3.5 items-center justify-center border-l border-[#ccc]">
          <Svg w={8} h={5}><path d="M0 0h8L4 5z" fill="#666" /></Svg>
        </span>
      </div>
    </div>
  );
}

/* ---------- desktop taskbar ---------- */

function Taskbar() {
  return (
    <footer className="relative flex h-8 shrink-0 overflow-hidden border-t border-[#333] bg-[#669966] text-white">
      <svg className="absolute inset-0 size-full" viewBox="0 0 911 31" preserveAspectRatio="none">
        <path d="M176 8c10-5 25 0 30-4h14l2 8-6 8h-18l-3-5zM192 25c15-4 45-1 55 6h-55z" fill="#396" />
        <path d="M509 1c-18 8-10 20 8 30h394V0H509z" fill="#396" opacity=".5" />
        <path d="M521 2h390v29H533c-15-9-20-20-12-29z" fill="#363" />
        <path d="M560 2h120l20 14-60-2-60 12zM720 5c40 0 70 8 90 20l-60-5-60 11h-20zM840 3h60v12c-20 8-40 6-50 0z" fill="#366" />
        <path d="M0 1h911" stroke="#9cc" strokeWidth="1" />
      </svg>
      <button aria-label="开始" className="relative w-9 border-r border-[#cec] bg-[#699]">
        <Svg w={22} h={28} className="mt-0.5">
          <path d="M0 2h19c2 0 2 2 2 4v22H0z" fill="#69c" opacity=".6" />
          <path d="M0 3c2-1 4 0 5 0v11H0z" fill="#8c3" />
          <path d="M7 3h13v11H7z" fill="#39f" />
          <path d="M0 16h5v12H0z" fill="#e95" />
          <path d="M7 16h13v12H7z" fill="#d33" />
          <path d="M7 3h7l-7 8zM7 16h6l-6 6z" fill="#fff" opacity=".35" />
        </Svg>
      </button>
      <button aria-label="GGG" className="relative ml-[3px] flex h-full w-[59px] justify-center border border-b-0 border-[#eee] bg-[#9dc49d]">
        <svg width="32" height="28" viewBox="0 0 32 28" className="mt-1">
          <path d="M.5 4.500h22v-4h8v28H.5z" fill="#fff" stroke="#000" />
          <path d="M.5 4.500h22v5H.5zM22.500.5h8v3h-8z" fill="#0ff" stroke="#000" />
          <path d="M.5 4.500h4v5h-4z" fill="#ccc" stroke="#000" />
          <path d="M8 7.500h10" stroke="#000" strokeDasharray="2 1" />
          <path d="M25 6.500h2M25 10.500h2M28 6.500h2M28 10.500h2" stroke="#000" />
          <text x="1" y="23" fontSize="14" fontFamily="Liberation Serif, serif">GGG</text>
        </svg>
      </button>
      <div className="relative ml-auto flex h-9 items-center text-xs">
        <span className={song}>CH</span>
        <Svg w={16} h={16} className="ml-2"><path d="M.5 7.500h14v6H.5z" fill="#ccc" stroke="#ddd" /><path d="M2 9.500h11M2 11.500h11" stroke="#666" strokeDasharray="1 1" /><path d="M8 7c0-4 5-1 6-5" stroke="#ddd" /></Svg>
        <span className="ml-1.5 flex size-4 items-center justify-center rounded-full border border-[#ccc] bg-[#00a] text-xs leading-3 font-bold">?</span>
        <Svg w={12} h={20} className="ml-2"><path d="M4.500 1.500h6v4h-6zM1.500 3.500h6v4h-6z" stroke="#fff" fill="#363" /><path d="M3 13h6l-3 3z" fill="#fff" /></Svg>
        <Svg w={16} h={16} className="ml-2 mt-1"><path d="M0 0h16v16H0z" fill="#39d" /><path d="M3 11c-1-4 2-7 5-5 2 1 3 5 5 4 2-2-2-5-4-2s-4 5-6 3z" stroke="#fff" strokeWidth="1.700" /></Svg>
        <Svg w={16} h={18} className="ml-2 mt-1"><path d="M8 1l6 2v6c0 4-3 6-6 8-3-2-6-4-6-8V3z" fill="#5a3" stroke="#fff" strokeWidth="1.500" /><path d="M9 4l-4 6h3l-1 4 4-6H8z" fill="#fff" /></Svg>
        <Svg w={16} h={16} className="ml-2.5 mt-1"><path d="M1.500 1.500h13v12h-13z" fill="#888" stroke="#ccc" /><path d="M1 9.500h14M4 12h2M8 12h4" stroke="#333" /></Svg>
        <Svg w={17} h={17} className="ml-2 mt-1"><circle cx="8.500" cy="8.500" r="8" fill="#3a3" /><path d="M8.500 1a8 8 0 0 1 0 15 8 8 0 0 1-7-5c2-3 2-7 7-10z" fill="#fd0" /><path d="M8.500 5v7M5 8.500h7" stroke="#030" strokeWidth="2" /></Svg>
        <Svg w={16} h={16} className="ml-2 mt-1"><path d="M1 5h3l5-4v14l-5-4H1z" fill="#c63" stroke="#fcc" strokeWidth=".7" /><path d="M12 4c2 3 2 5 0 8M14 2c2 4 2 8 0 12" stroke="#999" /></Svg>
        <Svg w={16} h={14} className="ml-2 mt-1"><path d="M1 11h2v2H1zM4 9h2v4H4zM7 7h2v6H7zM10 4h2v9h-2zM13 1h2v12h-2z" fill="#fff" /></Svg>
        <Svg w={16} h={16} className="ml-2 mt-1"><path d="M1 5h3l5-4v14l-5-4H1z" fill="#ddd" stroke="#666" strokeWidth=".7" /><circle cx="11" cy="11" r="3.500" fill="#fff" stroke="#e00" strokeWidth="2" /><path d="M8.500 8.500l5 5" stroke="#e00" strokeWidth="2" /></Svg>
        <Svg w={15} h={16} className="ml-2 mt-1"><path d="M2.500 3.500h4v11h-4zM3.500 1.500h2v2h-2z" stroke="#fff" /><path d="M7 5h7v3l-2 2H9l-2-2z" fill="#fff" /><path d="M9 2v3M12 2v3M10.500 10v5" stroke="#fff" strokeWidth="1.500" /></Svg>
        <div className="mt-0.5 ml-[15px] h-9 w-[60px] text-center text-xs leading-[19px]">
          <div>10:57</div>
          <div>2015/5/12</div>
        </div>
        <div className="ml-2 h-9 w-3 border-l border-[#9cc] bg-[#699]" />
      </div>
    </footer>
  );
}

export default function App() {
  return (
    <div className={clsx("relative flex h-screen flex-col overflow-hidden border border-black bg-white", ui)}>
      <div className="flex min-h-0 flex-1 flex-col border-r-[3px] border-b-[3px] border-l-2 border-[#ccc]">
        <TitleBar />
        <TabBar />
        <Ribbon />
        <QuickBar />
        <div className="flex min-h-0 flex-1">
          <ModelTree />
          <GraphicsArea />
        </div>
        <StatusBar />
      </div>
      <Taskbar />

      {/* download progress ball, half off the screen edge */}
      <div className="absolute top-[568px] -right-[30px] flex size-[47px] items-center rounded-full border-2 border-[#ccc] bg-[#6c6] pl-1 text-xs font-bold text-white shadow-[inset_0_0_0_2px_#396]">49</div>

      <svg className="pointer-events-none absolute top-[120px] left-[249px]" width="13" height="21" viewBox="0 0 13 21">
        <path d="M2 1v15l3-3 3 6 3-1-3-6h4z" fill="#fff" stroke="#223" />
      </svg>
    </div>
  );
}
